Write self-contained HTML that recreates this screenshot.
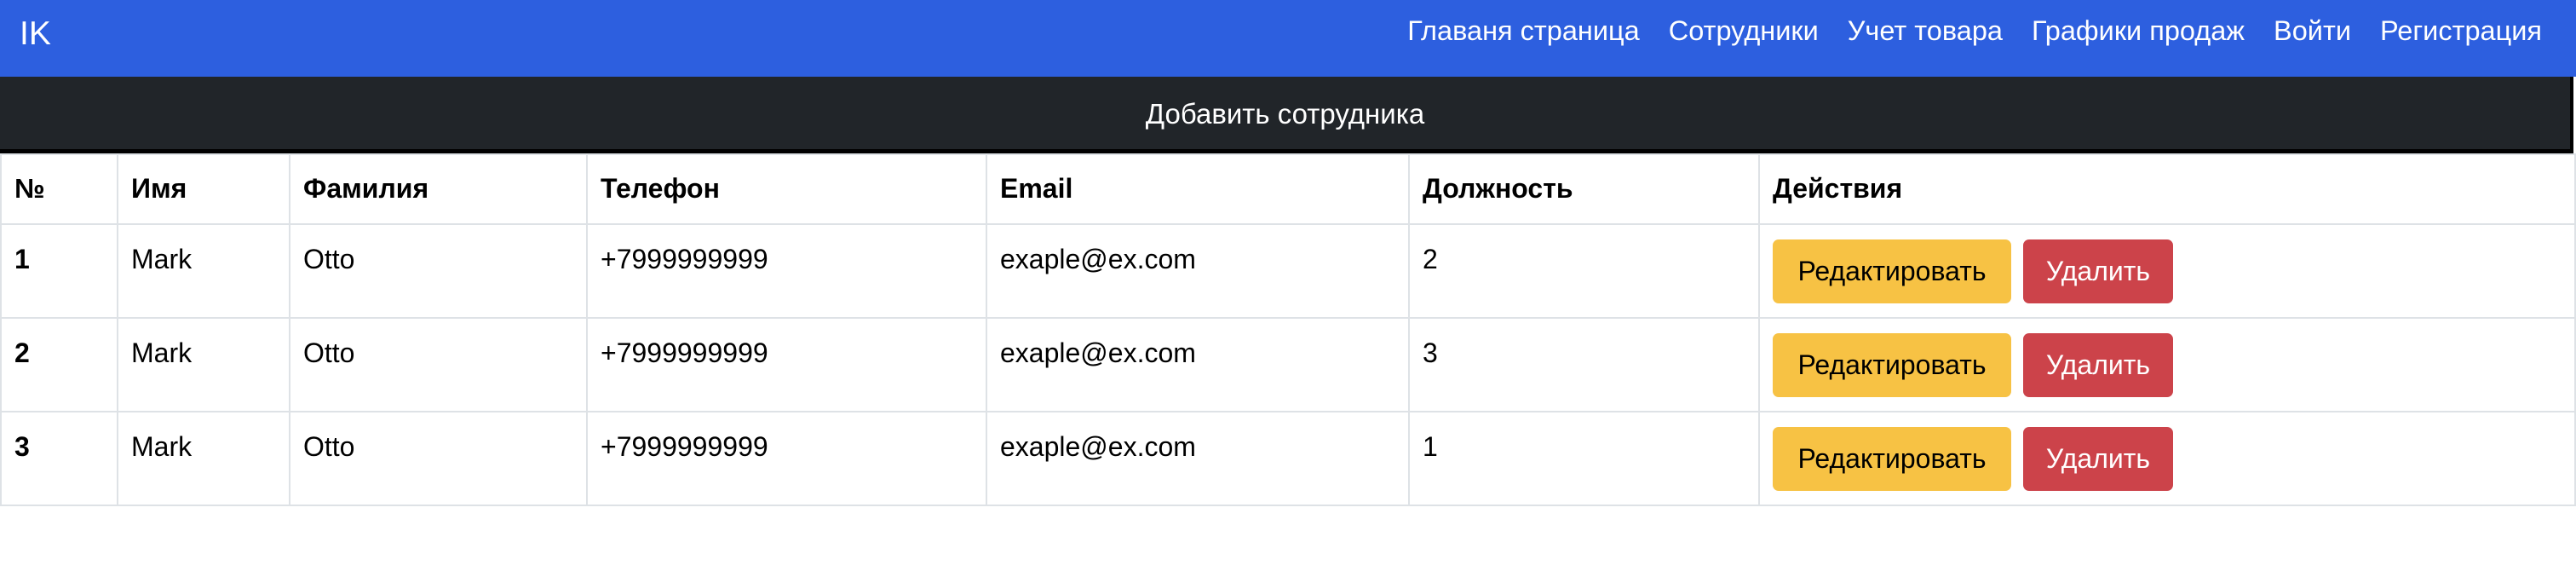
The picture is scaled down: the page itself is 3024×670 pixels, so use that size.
<!DOCTYPE html>
<html><head><meta charset="utf-8"><style>
*{box-sizing:border-box;margin:0;padding:0}
body{width:3024px;height:670px;background:#fff;font-family:"Liberation Sans",sans-serif;color:#000;overflow:hidden;position:relative}
.nav{position:absolute;left:0;top:0;width:3024px;height:90px;background:#2d5fdf;color:#fff}
.brand{position:absolute;left:23px;top:18px;font-size:39px}
.links{position:absolute;right:40px;top:18px;font-size:32.5px;display:flex;gap:34px}
.bar{position:absolute;left:0;top:90px;width:3021px;height:90px;background:#212529;border-bottom:5px solid #000;border-right:4px solid #000;color:#fff;font-size:33px;text-align:center;line-height:88px}
table{position:absolute;left:0;top:180px;width:3024px;border-collapse:collapse;font-size:32px;table-layout:fixed}
td,th{border:2px solid #dee2e6;padding:15px 15px;vertical-align:top;text-align:left}
th{height:82px;font-weight:bold;padding-top:21px}
td{height:110px;padding-top:22px}
td:first-child{font-weight:bold}
td.act{padding:17px 15px 13px}
.b{display:inline-block;height:75px;line-height:75px;border-radius:7px;font-size:32px;vertical-align:top}
.y{background:#f7c244;color:#000;width:280px;text-align:center}
.r{background:#cc434a;color:#fff;margin-left:14px;width:176px;text-align:center}
</style></head><body>
<div class="nav"><div class="brand">IK</div>
<div class="links"><span>Главаня страница</span><span>Сотрудники</span><span>Учет товара</span><span>Графики продаж</span><span>Войти</span><span>Регистрация</span></div></div>
<div class="bar">Добавить сотрудника</div>
<table>
<colgroup><col style="width:137px"><col style="width:202px"><col style="width:349px"><col style="width:469px"><col style="width:496px"><col style="width:411px"><col></colgroup>
<tr><th>№</th><th>Имя</th><th>Фамилия</th><th>Телефон</th><th>Email</th><th>Должность</th><th>Действия</th></tr>
<tr><td>1</td><td>Mark</td><td>Otto</td><td>+7999999999</td><td>exaple@ex.com</td><td>2</td><td class="act"><span class="b y">Редактировать</span><span class="b r">Удалить</span></td></tr>
<tr><td>2</td><td>Mark</td><td>Otto</td><td>+7999999999</td><td>exaple@ex.com</td><td>3</td><td class="act"><span class="b y">Редактировать</span><span class="b r">Удалить</span></td></tr>
<tr><td>3</td><td>Mark</td><td>Otto</td><td>+7999999999</td><td>exaple@ex.com</td><td>1</td><td class="act"><span class="b y">Редактировать</span><span class="b r">Удалить</span></td></tr>
</table>
</body></html>
